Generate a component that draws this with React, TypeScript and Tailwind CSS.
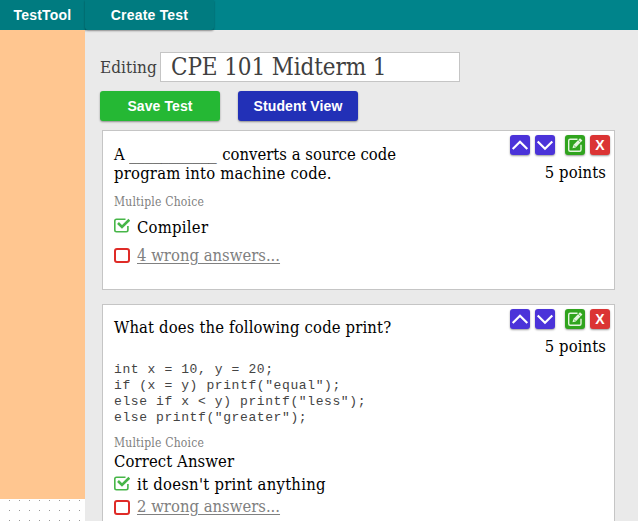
import React from 'react';

const serif = "font-['DejaVu_Serif_Condensed','DejaVu_Serif',serif] [font-stretch:condensed]";
const buttonShadow = 'shadow-[0_1px_2px_rgba(0,0,0,0.4)]';

function Tool({ color, children }: { color: string; children: React.ReactNode }) {
  return (
    <button className={`flex h-5 w-5 items-center justify-center rounded-[3px] ${buttonShadow} ${color}`}>
      {children}
    </button>
  );
}

function Chevron({ d }: { d: string }) {
  return (
    <svg className="h-5 w-5" viewBox="0 0 20 20" fill="none" stroke="white" strokeWidth="2.2">
      <path d={d} />
    </svg>
  );
}

function EditIcon() {
  return (
    <svg className="h-5 w-5" viewBox="0 0 20 20" fill="none" stroke="#e4f5df" strokeWidth="1.4">
      <path d="M12.5 4.3H5.2Q3.7 4.3 3.7 5.8V14.7Q3.7 16.2 5.2 16.2H14.5Q16 16.2 16 14.7V9.8" />
      <path d="M7.5 13.2L8.3 10L15 3.2L17.4 5.6L10.7 12.4Z" fill="#e4f5df" stroke="none" />
      <path d="M13.2 5L15.6 7.4M8.8 10.3L10.5 12" stroke="#30a41e" strokeWidth="0.7" />
    </svg>
  );
}

function CardTools() {
  return (
    <div className="flex w-[105px] shrink-0 flex-col">
      <div className="flex h-5 pl-[5px]">
        <Tool color="bg-[#4b33d9]"><Chevron d="M2.7 14L10 6.8L17.3 14" /></Tool>
        <div className="ml-[5px]"><Tool color="bg-[#4b33d9]"><Chevron d="M2.7 6.5L10 13.7L17.3 6.5" /></Tool></div>
        <div className="ml-[10px]"><Tool color="bg-[#30a41e]"><EditIcon /></Tool></div>
        <div className="ml-[5px]">
          <Tool color="bg-[#db3434]">
            <span className="font-['Liberation_Sans',sans-serif] text-[14px] leading-5 font-bold text-white">X</span>
          </Tool>
        </div>
      </div>
      <div className={`mt-[8px] pr-1 text-right text-[16.5px] leading-5 tracking-[0.1px] whitespace-nowrap ${serif}`}>5 points</div>
    </div>
  );
}

function Checked() {
  return (
    <svg className="h-4 w-4 shrink-0" viewBox="0 0 16 16" fill="none" stroke="#47b648">
      <path d="M11.5 1.2H2.5Q0.8 1.2 0.8 2.9V12Q0.8 13.7 2.5 13.7H12.2Q13.9 13.7 13.9 12V8" strokeWidth="1.6" />
      <path d="M4 5L8 9L15.3 1.8" strokeWidth="2.6" />
    </svg>
  );
}

function Unchecked() {
  return <span className="h-[15px] w-4 shrink-0 rounded-[3px] border-2 border-[#df2b27]" />;
}

export default function App() {
  return (
    <div className="h-[521px] w-[638px] overflow-hidden bg-[#eaeaea] text-black">
      <header className="relative z-10 flex h-[30px] bg-[#00848b] font-['Liberation_Sans',sans-serif] text-[14px] leading-[30px] font-bold tracking-[0.2px] text-white">
        <div className={`h-[30px] w-[85px] bg-[#007b80] text-center ${buttonShadow}`}>TestTool</div>
        <div className={`h-[30px] w-[129px] rounded-b-[3px] bg-[#007b80] text-center ${buttonShadow}`}>Create Test</div>
      </header>
      <div className="flex h-[491px]">
        <aside className="flex w-[85px] shrink-0 flex-col bg-white">
          <div className="relative z-20 h-[469px] bg-[#ffc690]" />
          <svg className="h-[22px] w-[85px]" viewBox="0 0 85 22" fill="#999">
            {[1, 11, 21].map((y) => [9, 19, 29, 39, 49, 59, 69, 79].map((x) => (
              <rect key={`${x}-${y}`} x={x} y={y} width="1" height="1" />
            )))}
          </svg>
        </aside>
        <main className="flex w-[553px] flex-col pt-[22px]">
          <div className={`flex h-[30px] pl-[15px] text-[#404040] ${serif}`}>
            <span className="w-[60px] text-[17px] leading-[30px] tracking-[0.05px] whitespace-nowrap">Editing</span>
            <div className="h-[30px] w-[300px] border border-[#c5c5c5] bg-white pl-[10px] text-[24px] leading-[28px] tracking-[-0.12px] whitespace-nowrap">CPE 101 Midterm 1</div>
          </div>
          <div className="mt-[9px] flex gap-[18px] pl-[15px] font-['Liberation_Sans',sans-serif] text-[14px] font-bold tracking-[0.1px] text-white">
            <button className={`h-[30px] w-[120px] rounded-[3px] bg-[#25b834] ${buttonShadow}`}>Save Test</button>
            <button className={`h-[30px] w-[120px] rounded-[3px] bg-[#2230b7] ${buttonShadow}`}>Student View</button>
          </div>

          <section className={`mt-[9px] ml-[17px] flex h-[160px] w-[513px] shrink-0 justify-between border border-[#c5c5c5] bg-white pt-1 pr-1 pl-[11px] text-[16.5px] ${serif}`}>
            <div className="flex flex-col pt-[10px]">
              <p className="leading-[19px] whitespace-nowrap">
                A <span className="inline-block w-[88px] tracking-[-0.25px]"><span className="inline-block origin-left scale-x-[1.11]">___________</span></span><span className="tracking-[0.02px]"> converts a source code</span><br />
                <span className="tracking-[0.2px]">program into machine code.</span>
              </p>
              <p className="mt-[10px] text-[12px] leading-[18px] tracking-[0.2px] text-[#808080]">Multiple Choice</p>
              <div className="mt-[5px] flex h-5 items-center gap-[7px]"><Checked /><span className="mt-1 leading-5 tracking-[0.25px]">Compiler</span></div>
              <div className="mt-[9px] flex h-5 items-center gap-[7px]"><Unchecked /><span className="mt-[2px] leading-5 text-[#808080] underline underline-offset-2">4 wrong answers...</span></div>
            </div>
            <CardTools />
          </section>

          <section className={`mt-[14px] ml-[17px] flex h-[240px] w-[513px] shrink-0 justify-between border border-[#c5c5c5] bg-white pt-1 pr-1 pl-[11px] text-[16.5px] ${serif}`}>
            <div className="flex flex-col pt-[9px]">
              <p className="leading-5 tracking-[0.15px] whitespace-nowrap">What does the following code print?</p>
              <pre className="mt-[24px] font-['Liberation_Mono',monospace] text-[13px] leading-[16px] tracking-[0.6px] text-[#444]">{`int x = 10, y = 20;
if (x = y) printf("equal");
else if x < y) printf("less");
else printf("greater");`}</pre>
              <p className="mt-[8px] text-[12px] leading-[18px] tracking-[0.2px] text-[#808080]">Multiple Choice</p>
              <p className="leading-5 tracking-[0.1px]">Correct Answer</p>
              <div className="mt-[2px] flex h-5 items-center gap-[7px]"><Checked /><span className="mt-[2px] leading-5 tracking-[0.26px]">it doesn't print anything</span></div>
              <div className="mt-[3px] flex h-5 items-center gap-[7px]"><Unchecked /><span className="leading-5 text-[#808080] underline underline-offset-2">2 wrong answers...</span></div>
            </div>
            <CardTools />
          </section>
        </main>
      </div>
    </div>
  );
}
